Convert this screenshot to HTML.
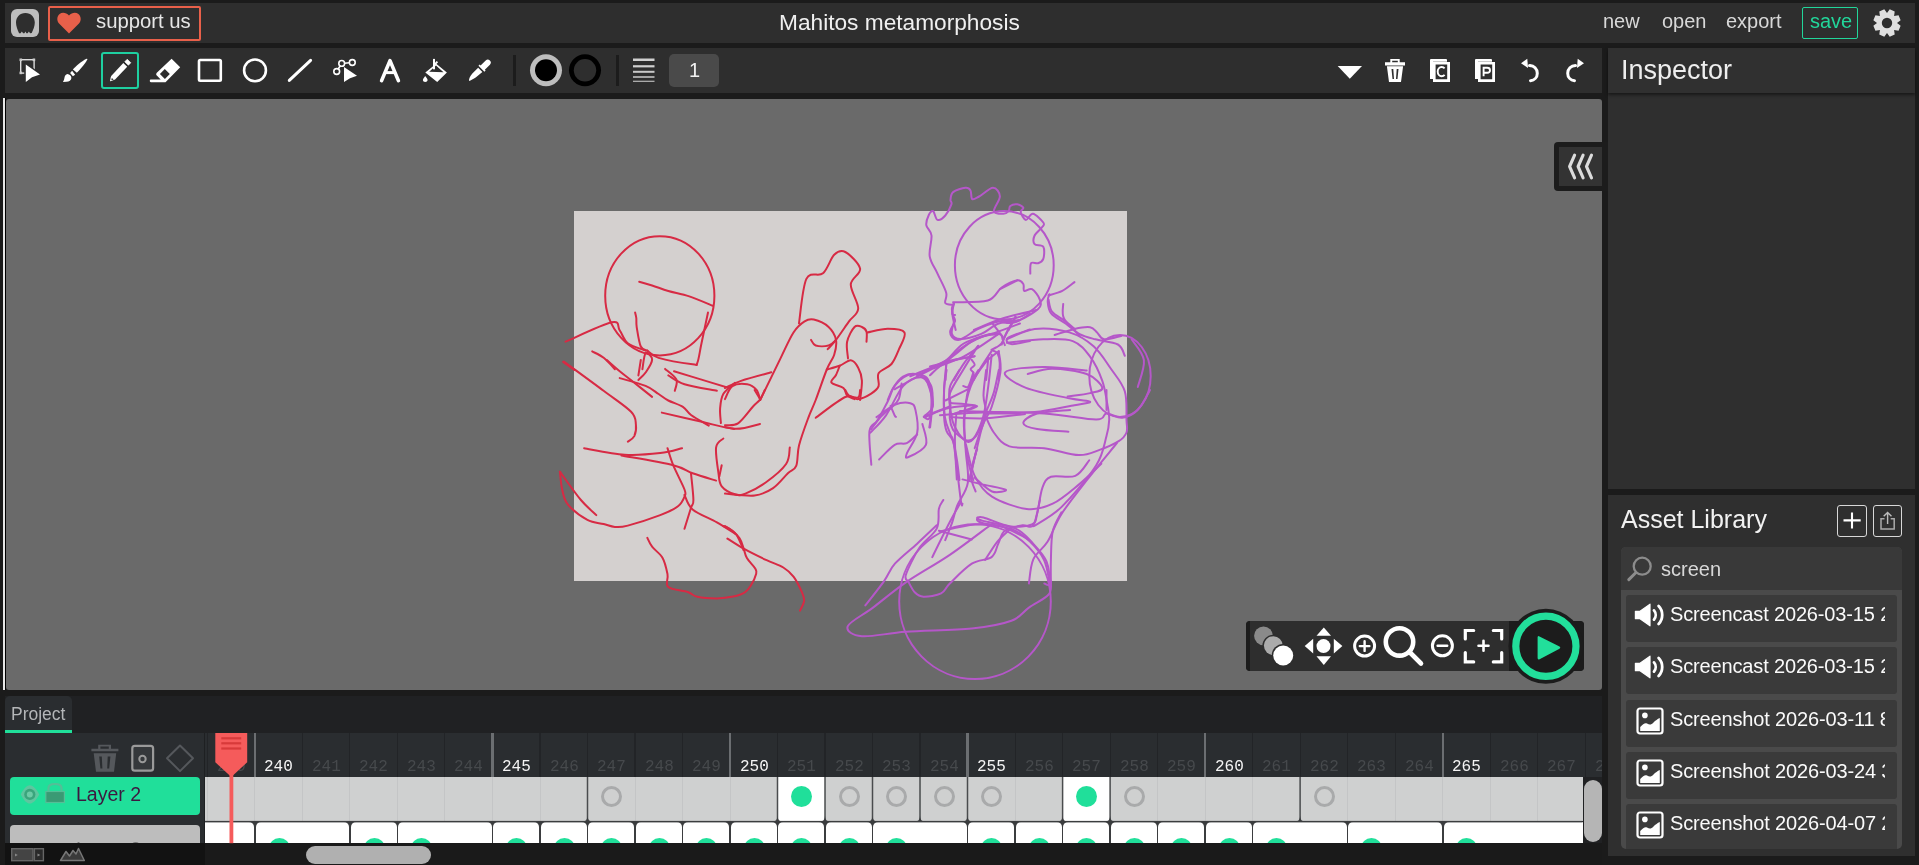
<!DOCTYPE html>
<html><head><meta charset="utf-8">
<style>
*{box-sizing:border-box;margin:0;padding:0}
html,body{width:1919px;height:865px;overflow:hidden;background:#1b1b1b;font-family:"Liberation Sans",sans-serif;position:relative}
.a{position:absolute}
.txt{white-space:nowrap;line-height:1;will-change:transform}
#topbar{left:5px;top:3px;width:1910px;height:40px;background:#2e2e2e}
#toolbar{left:5px;top:48px;width:1597px;height:45px;background:#2e2e2e}
#canvas{left:6px;top:99px;width:1596px;height:591px;background:#6a6a6a;border-radius:3px;overflow:hidden}
#insp-h{left:1608px;top:48px;width:307px;height:45px;background:#303030;box-shadow:0 2px 3px rgba(0,0,0,.5);z-index:2}
#insp-b{left:1608px;top:93px;width:307px;height:396px;background:#2f2f2f}
#asset{left:1608px;top:495px;width:307px;height:361px;background:#2f2f2f}
#timeline{left:5px;top:696px;width:1597px;height:169px;background:#202123}
</style></head><body>
<div id="topbar" class="a"></div>
<div id="toolbar" class="a"></div>
<div id="canvas" class="a"></div>
<div id="insp-h" class="a"></div>
<div id="insp-b" class="a"></div>
<div id="asset" class="a"></div>
<div id="timeline" class="a"></div>

<!-- TOPBAR CONTENT -->
<div class="a" style="left:11px;top:9px;width:28px;height:28px;border-radius:6px;background:#bdbdbd"></div>
<svg class="a" style="left:11px;top:9px" width="28" height="28" viewBox="0 0 28 28"><path d="M14.4 4 C8.8 4 5 8.2 5 13.6 C5 17.5 6.6 21 8.1 24.2 L9.6 24.2 L10.8 22.6 L12.2 24.2 L13.4 24.2 L14.4 22.6 L15.4 24.2 L16.6 24.2 L17.9 22.6 L19.1 24.2 L20.7 24 C22.2 20.8 23.8 17.5 23.8 13.6 C23.8 8.2 20 4 14.4 4Z" fill="#2e2e2e"/></svg>
<div class="a" style="left:48px;top:6px;width:153px;height:35px;border:2px solid #e8604a;border-radius:2px"></div>
<svg class="a" style="left:57px;top:12px" width="24" height="22" viewBox="0 0 24 22"><path d="M12 21.5 L2.3 11.8 C-0.5 9 -0.3 4.3 2.6 2 C5.2 0 9.3 0.5 12 3.6 C14.7 0.5 18.8 0 21.4 2 C24.3 4.3 24.5 9 21.7 11.8Z" fill="#e8604a"/></svg>
<div class="a txt" style="left:96px;top:11px;font-size:20.3px;color:#e6e6e6">support us</div>
<div class="a txt" id="title" style="left:779px;top:11px;font-size:22.7px;color:#f0f0f0">Mahitos metamorphosis</div>
<div class="a txt" style="left:1603px;top:11px;font-size:20px;color:#d8d8d8">new</div>
<div class="a txt" style="left:1662px;top:11px;font-size:20px;color:#d8d8d8">open</div>
<div class="a txt" style="left:1726px;top:11px;font-size:20px;color:#d8d8d8">export</div>
<div class="a" style="left:1802px;top:7px;width:56px;height:32px;border:1.5px solid #22d69a;border-radius:2px"></div>
<div class="a txt" style="left:1810px;top:11px;font-size:20px;color:#22d69a">save</div>
<svg class="a" style="left:1873px;top:9px" width="28" height="28" viewBox="0 0 28 28"><path fill-rule="evenodd" fill="#e0e0e0" d="M14.00,4.00 L16.71,0.37 L21.72,2.44 L21.07,6.93 L25.56,6.28 L27.63,11.29 L24.00,14.00 L27.63,16.71 L25.56,21.72 L21.07,21.07 L21.72,25.56 L16.71,27.63 L14.00,24.00 L11.29,27.63 L6.28,25.56 L6.93,21.07 L2.44,21.72 L0.37,16.71 L4.00,14.00 L0.37,11.29 L2.44,6.28 L6.93,6.93 L6.28,2.44 L11.29,0.37Z M14 8.8 A5.2 5.2 0 1 0 14 19.2 A5.2 5.2 0 1 0 14 8.8Z"/></svg>


<!-- CANVAS CONTENT -->
<div class="a" style="left:3px;top:98px;width:1.6px;height:592px;background:#e8e8e8"></div>
<div class="a" style="left:4.6px;top:98px;width:1.4px;height:592px;background:#000"></div>
<div class="a" style="left:573.5px;top:211.3px;width:553.5px;height:369.7px;background:#d4d0cf"></div>
<!-- DRAWING -->
<svg class="a" style="left:0;top:0" width="1602" height="690" viewBox="0 0 1602 690">
<g fill="none" stroke="#d72a44" stroke-width="2" stroke-linecap="round" stroke-linejoin="round">
<ellipse cx="659.8" cy="295.8" rx="54.6" ry="59.6"/>
<path d="M639.2 281.8C641.4 282.4 647.2 284.0 652.1 285.5C657.0 287.0 662.1 289.2 668.3 291.0C674.5 292.8 681.9 293.9 689.3 296.4C696.7 298.9 708.9 304.2 712.8 305.8"/>
<path d="M635.1 312.5C635.3 313.4 636.0 315.6 636.3 318.0C636.6 320.4 636.0 322.4 636.7 327.1C637.5 331.9 639.0 342.6 640.8 346.5C642.6 350.4 646.2 349.9 647.3 350.6"/>
<path d="M708.0 312.5C706.9 317.6 703.3 334.9 701.5 343.3C699.7 351.7 698.9 359.2 697.4 362.7C695.9 366.2 699.1 365.1 692.6 364.3C686.1 363.5 666.2 360.2 658.6 357.9C651.0 355.6 649.2 351.8 647.3 350.6"/>
<path d="M565.5 341.7C573.2 338.5 602.7 324.2 611.7 322.3C620.7 320.4 617.0 326.9 619.7 330.4C622.4 333.9 623.5 339.9 627.8 343.3C632.1 346.7 642.6 349.4 645.6 350.6"/>
<path d="M592.2 351.4C594.2 352.5 600.2 355.0 604.0 358.0C607.8 361.0 613.1 367.3 614.9 369.2"/>
<path d="M563.1 361.9L574.4 370.0"/>
<path d="M642.4 369.2C642.9 366.5 644.0 354.6 645.6 353.0C647.2 351.4 652.0 356.3 652.1 359.5C652.2 362.7 648.3 368.6 646.0 372.0C643.7 375.4 639.7 378.7 638.4 380.0"/>
<path d="M563.9 361.6C570.5 366.5 592.4 382.4 603.6 390.8C614.8 399.2 625.7 406.2 631.1 411.8C636.5 417.4 635.4 420.6 635.9 424.7C636.4 428.8 635.6 433.3 634.3 436.1C632.9 438.9 628.9 440.8 627.8 441.7"/>
<path d="M606.8 360.0C608.9 361.9 615.1 367.5 619.7 371.3C624.3 375.1 628.9 378.4 634.3 382.7C639.7 387.0 649.1 394.5 652.1 396.9"/>
<path d="M619.7 378.1C624.0 379.4 639.1 383.2 645.6 385.9C652.1 388.5 654.8 391.6 658.6 394.0C662.4 396.4 664.2 398.4 668.3 400.5C672.3 402.6 679.1 404.5 682.9 406.9C686.7 409.3 686.7 411.9 691.0 415.0C695.3 418.1 705.8 423.8 708.8 425.6"/>
<path d="M638.4 375.4L640.8 360.0"/>
<path d="M665.1 368.9C667.0 370.6 674.8 375.8 676.4 379.4C678.0 383.0 675.1 388.9 674.8 390.8"/>
<path d="M674.0 371.3C678.5 372.6 691.4 376.6 700.7 379.4C710.0 382.2 724.9 386.8 729.8 388.3"/>
<path d="M668.3 375.4C671.0 376.9 676.4 381.7 684.5 384.3C692.6 386.9 711.5 389.7 716.9 390.8"/>
<path d="M661.8 412.6C668.3 414.1 688.5 418.8 700.7 421.5C712.9 424.2 725.1 428.4 735.0 428.8C744.9 429.2 755.8 424.8 760.0 424.0"/>
<path d="M735.0 382.7C733.0 384.6 725.8 389.7 723.3 394.0C720.8 398.3 720.5 403.8 720.1 408.6C719.7 413.5 720.8 420.7 720.9 423.1"/>
<path d="M584.1 448.2C590.9 449.3 611.9 453.9 624.6 454.7C637.3 455.5 650.6 454.2 660.2 453.1C669.8 452.0 678.5 449.0 682.1 448.2"/>
<path d="M621.4 455.5C630.0 457.1 661.3 462.2 673.2 465.2C685.1 468.2 685.5 470.7 692.6 473.3C699.8 475.9 712.2 479.4 716.1 480.6"/>
<path d="M667.5 448.2C668.5 451.0 670.4 458.3 673.2 465.2C676.0 472.1 682.6 484.3 684.5 489.5C686.4 494.7 685.6 493.7 684.5 496.5C683.4 499.3 682.0 503.1 678.0 506.2C674.0 509.3 668.6 511.9 660.2 515.1C651.8 518.3 635.3 523.6 627.8 525.6C620.2 527.6 618.9 527.2 614.9 526.9C610.9 526.6 608.2 525.2 603.6 524.0C599.0 522.8 593.3 523.1 587.4 519.9C581.5 516.7 572.2 509.6 568.0 504.6C563.8 499.6 563.6 495.5 562.3 490.0C560.9 484.5 560.3 474.8 559.9 471.7"/>
<path d="M691.0 473.3C691.4 477.8 693.4 494.2 693.4 500.0C693.4 505.8 692.5 503.0 691.0 507.8C689.5 512.6 685.6 525.3 684.5 528.8"/>
<path d="M723.3 438.5C722.1 440.0 716.9 441.6 716.1 447.4C715.3 453.2 717.6 466.8 718.5 473.3C719.4 479.8 719.0 482.8 721.7 486.3C724.5 489.8 731.0 493.1 735.0 494.3C739.0 495.5 740.3 495.6 745.4 493.6C750.5 491.6 758.9 487.4 765.7 482.5C772.5 477.6 782.1 469.9 786.1 464.0C790.1 458.1 789.2 450.2 789.8 447.4"/>
<path d="M721.7 465.2L719.3 476.5"/>
<path d="M559.9 471.7C563.4 476.4 574.8 492.8 580.9 500.0C587.0 507.2 593.7 512.6 596.3 515.1"/>
<path d="M684.5 494.9C685.9 497.3 687.2 504.8 692.6 509.4C698.0 514.0 709.8 518.3 716.9 522.4C724.0 526.5 732.0 531.8 735.0 533.7"/>
<path d="M727.4 538.6C730.1 540.3 737.2 545.1 743.7 548.7C750.2 552.3 760.0 557.1 766.6 560.2C773.2 563.3 778.8 564.7 783.3 567.5C787.8 570.3 790.6 572.6 793.7 576.8C796.8 580.9 800.3 588.4 802.0 592.4C803.7 596.4 804.4 597.8 804.1 600.8C803.8 603.8 800.7 609.1 800.0 610.7"/>
<path d="M647.3 537.8C648.1 539.3 649.5 543.3 652.1 546.7C654.7 550.1 660.0 553.4 662.6 558.0C665.2 562.6 666.5 569.4 667.5 574.2C668.5 579.1 664.9 584.1 668.3 587.1C671.7 590.1 682.9 590.4 687.7 592.0C692.6 593.6 692.5 595.7 697.4 596.8C702.3 597.9 710.9 598.4 716.9 598.4C722.9 598.4 728.6 597.6 733.3 596.6C737.9 595.6 741.8 594.3 744.8 592.4C747.8 590.5 749.1 588.3 751.0 585.2C752.9 582.1 755.5 576.5 756.2 573.7C756.9 570.9 756.8 571.1 755.2 568.5C753.7 565.9 748.8 561.4 746.9 558.1C745.0 554.8 744.9 552.0 743.7 548.7C742.5 545.4 741.7 541.4 739.6 538.3C737.5 535.2 733.9 532.0 731.2 530.0C728.5 528.0 724.6 526.7 723.3 526.0"/>
<path d="M799.0 323.3C800.2 315.9 802.4 287.2 806.4 278.9C810.4 270.6 818.4 277.3 823.0 273.3C827.6 269.3 830.5 258.4 834.2 254.8C837.9 251.2 841.0 249.7 845.3 252.0C849.6 254.3 859.2 263.3 860.1 268.7C861.0 274.1 851.1 277.8 850.8 284.4C850.5 291.0 858.5 302.3 858.2 308.5C857.9 314.7 852.7 316.2 849.0 321.4C845.3 326.6 839.5 335.3 836.0 339.9C832.5 344.5 829.1 347.6 827.7 349.2"/>
<path d="M760.2 400.0C763.6 393.1 775.0 369.6 780.5 358.4C786.0 347.1 789.5 338.7 793.5 332.5C797.5 326.3 801.2 323.5 804.6 321.4C808.0 319.2 809.8 318.7 813.8 319.6C817.8 320.5 824.9 323.6 828.6 327.0C832.3 330.4 835.1 335.3 836.0 339.9C836.9 344.5 835.7 349.8 834.2 354.7C832.7 359.6 829.9 361.9 826.8 369.5C823.7 377.1 818.8 391.9 815.7 400.0C812.6 408.1 811.1 410.2 808.3 417.8C805.5 425.4 801.0 437.5 799.0 445.5C797.0 453.5 798.1 461.3 796.2 465.9C794.4 470.5 791.8 469.6 787.9 473.3C784.0 477.0 778.6 484.4 773.1 488.1C767.6 491.8 762.6 494.6 754.6 495.5C746.6 496.4 729.9 493.9 725.0 493.6"/>
<path d="M811.0 339.9C811.8 340.8 812.8 344.6 815.7 345.5C818.6 346.4 825.2 346.4 828.6 345.5C832.0 344.6 834.8 340.8 836.0 339.9"/>
<path d="M725.0 388.0C727.8 386.8 734.0 383.2 741.7 380.6C749.4 378.0 766.4 373.7 771.3 372.3"/>
<path d="M725.0 399.1C726.2 397.0 728.7 388.7 732.4 386.2C736.1 383.7 743.2 383.7 747.2 384.3C751.2 384.9 754.3 387.3 756.5 389.9C758.7 392.5 759.6 398.3 760.2 400.0"/>
<path d="M866.5 341.8C866.5 340.1 867.3 334.1 866.5 331.6C865.7 329.1 863.9 327.8 861.9 327.0C859.9 326.2 857.0 324.5 854.5 327.0C852.0 329.5 848.2 336.6 847.1 341.8C846.0 347.0 847.9 355.6 848.0 358.4"/>
<path d="M867.5 332.5C870.9 331.9 881.6 328.8 887.8 328.8C894.0 328.8 902.6 329.1 904.5 332.5C906.4 335.9 901.2 343.9 899.0 349.2C896.8 354.4 894.9 360.0 891.5 364.0C888.1 368.0 880.8 369.5 878.6 373.2C876.5 376.9 879.8 382.8 878.6 386.2C877.4 389.6 874.6 391.5 871.2 393.6C867.8 395.8 862.5 398.5 858.2 399.1C853.9 399.7 852.4 393.9 845.3 397.0C838.2 400.1 820.6 414.3 815.7 417.8"/>
<path d="M826.8 369.5C828.9 368.9 835.7 367.3 839.7 365.8C843.7 364.3 847.7 360.0 850.8 360.3C853.9 360.6 856.4 364.3 858.2 367.7C860.1 371.1 861.6 375.2 861.9 380.6C862.2 386.0 860.4 396.8 860.1 400.0"/>
<path d="M839.7 365.8C839.1 367.3 837.4 372.2 836.0 375.0C834.6 377.8 830.2 380.3 831.4 382.5C832.6 384.7 840.8 385.9 843.4 388.0C846.0 390.1 845.2 393.5 847.1 395.4C849.0 397.2 853.3 398.5 854.5 399.1"/>
<path d="M725.0 425.2C727.2 424.9 733.4 426.4 738.0 423.3C742.6 420.2 749.1 410.7 752.8 406.7C756.5 402.7 758.2 402.1 760.2 399.3C762.2 396.5 764.0 391.6 764.8 390.0"/>
<path d="M754.6 390.0L760.2 399.3"/>
<path d="M725.0 427.0L734.3 428.9"/>
<path d="M845.3 390.0C845.9 390.9 846.9 394.4 849.0 395.6C851.1 396.8 856.4 398.3 858.2 397.4C860.1 396.5 859.8 391.2 860.1 390.0"/>
<path d="M725.0 526.0C726.9 527.4 733.0 530.3 736.1 534.3C739.2 538.3 742.3 547.4 743.5 550.0"/>
</g>
<g fill="none" stroke="#b557c9" stroke-width="2" stroke-linecap="round" stroke-linejoin="round">
<ellipse cx="1004.3" cy="265.3" rx="49.4" ry="54.2"/>
<path d="M953.1 304.8C951.8 304.5 946.4 305.1 945.3 303.1C944.1 301.1 947.5 297.6 946.2 292.7C944.9 287.8 940.2 279.7 937.5 273.6C934.8 267.5 930.7 262.7 929.7 256.3C928.7 250.0 932.1 240.7 931.5 235.5C930.9 230.3 926.7 228.6 926.3 225.1C925.9 221.6 927.8 217.0 928.9 214.7C930.0 212.4 931.8 210.3 933.2 211.2C934.6 212.1 935.5 219.2 937.5 219.9C939.5 220.6 943.0 218.1 945.3 215.5C947.6 212.9 950.5 206.9 951.4 204.3C952.3 201.7 950.2 201.9 950.5 199.9C950.8 197.9 950.6 194.1 953.1 192.1C955.6 190.1 962.4 188.1 965.3 187.8C968.2 187.5 969.4 188.5 970.5 190.4C971.6 192.3 970.8 198.1 972.2 199.1C973.6 200.1 975.6 198.4 979.1 196.5C982.6 194.6 989.5 187.8 993.0 187.8C996.5 187.8 999.8 192.6 999.9 196.5C1000.0 200.4 993.3 208.3 993.9 211.2C994.5 214.1 1000.9 213.8 1003.4 213.8C1005.9 213.8 1007.5 212.5 1008.6 211.2C1009.8 209.9 1008.8 207.2 1010.3 206.0C1011.8 204.8 1015.1 204.0 1017.3 204.3C1019.5 204.6 1022.7 206.4 1023.3 207.7C1023.9 209.0 1020.3 210.1 1020.7 212.1C1021.1 214.1 1023.9 219.6 1025.9 219.9C1027.9 220.2 1030.0 213.4 1032.9 213.8C1035.8 214.2 1041.7 220.3 1043.3 222.5C1044.9 224.7 1043.9 224.6 1042.4 226.8C1041.0 229.0 1035.9 232.6 1034.6 235.5C1033.3 238.4 1033.1 242.2 1034.6 244.1C1036.0 246.0 1041.8 244.2 1043.3 246.7C1044.8 249.2 1044.2 256.1 1043.3 258.9C1042.4 261.6 1040.1 262.5 1038.1 263.2C1036.1 263.9 1032.4 261.5 1031.1 263.2C1029.8 264.9 1030.4 271.9 1030.3 273.6"/>
<path d="M953.1 302.2C958.9 301.9 979.7 302.9 987.8 300.5C995.9 298.1 996.8 290.9 1001.7 287.5C1006.6 284.1 1013.7 280.8 1017.3 280.2C1020.9 279.6 1022.1 282.2 1023.3 284.0C1024.5 285.8 1022.8 290.0 1024.2 290.9C1025.7 291.8 1029.4 287.8 1032.0 289.2C1034.6 290.6 1038.8 296.3 1039.8 299.6C1040.8 302.9 1042.1 305.4 1038.1 309.1C1034.0 312.9 1021.6 319.9 1015.5 322.1C1009.4 324.3 1004.0 322.1 1001.7 322.1"/>
<path d="M954.0 303.9C953.7 305.5 952.0 309.1 952.3 313.5C952.6 317.9 955.1 327.2 955.7 330.0"/>
<path d="M1048.5 295.3C1050.8 294.6 1058.0 293.1 1062.3 290.9C1066.6 288.7 1072.5 283.6 1074.5 282.1"/>
<path d="M1048.5 299.6C1049.1 301.6 1049.4 308.2 1052.0 311.7C1054.6 315.2 1060.3 317.5 1064.1 320.4C1067.9 323.3 1073.2 327.6 1075.0 329.0"/>
<path d="M1063.2 303.9C1063.3 306.4 1061.3 313.4 1064.1 318.7C1066.8 324.0 1077.1 333.0 1079.7 335.9"/>
<path d="M973.9 330.0C978.5 328.1 991.3 322.0 1001.7 318.7C1012.1 315.4 1030.5 311.4 1036.3 310.0"/>
<path d="M1015.5 316.9L1008.6 330.0"/>
<path d="M1049.4 294.3C1049.1 295.4 1047.4 298.0 1047.7 301.2C1048.0 304.4 1048.1 309.6 1051.1 313.3C1054.1 317.1 1061.1 320.2 1065.9 323.7C1070.7 327.2 1074.8 331.5 1079.7 334.1C1084.6 336.7 1088.9 337.6 1095.3 339.3C1101.7 341.0 1113.0 341.8 1117.9 344.5C1122.8 347.2 1123.7 353.9 1124.8 355.8"/>
<ellipse cx="1120" cy="376" rx="30.7" ry="41"/>
<path d="M1131.7 339.3C1133.7 342.8 1142.9 352.2 1143.9 360.1C1144.9 368.1 1138.8 382.5 1137.8 387.0"/>
<path d="M1006.9 339.3C1011.5 337.6 1024.3 330.0 1034.7 328.9C1045.1 327.8 1059.5 329.5 1069.3 332.4C1079.1 335.3 1086.7 340.2 1093.6 346.3C1100.5 352.4 1105.7 361.3 1110.9 368.8C1116.1 376.3 1122.2 382.8 1124.8 391.3C1127.4 399.8 1126.2 413.1 1126.5 420.0C1126.8 426.9 1127.8 429.0 1126.5 432.5C1125.2 436.0 1123.2 438.3 1118.7 441.2C1114.2 444.1 1106.2 447.6 1099.6 449.9C1092.9 452.2 1088.0 455.4 1078.8 455.1C1069.5 454.8 1055.7 449.6 1044.1 448.2C1032.5 446.8 1017.8 449.0 1009.4 446.4C1001.0 443.8 997.8 437.7 993.8 432.5C989.8 427.3 986.5 418.1 985.1 415.2"/>
<path d="M1006.9 342.8C1013.0 342.2 1032.3 339.6 1043.3 339.3C1054.3 339.0 1065.0 338.2 1072.8 341.1C1080.6 344.0 1085.2 350.1 1090.1 356.7C1095.0 363.3 1099.4 372.8 1102.3 380.9C1105.2 389.0 1106.3 398.7 1107.5 405.2C1108.7 411.7 1109.4 414.9 1109.2 420.0C1109.0 425.1 1108.7 428.4 1106.5 436.0C1104.3 443.6 1103.6 453.6 1096.1 465.5C1088.6 477.4 1071.8 497.0 1061.4 507.1C1051.0 517.2 1038.3 523.0 1033.7 526.2"/>
<path d="M1054.6 335.0C1057.9 334.0 1068.6 330.2 1074.5 328.9C1080.4 327.6 1086.3 326.6 1090.1 327.2C1093.9 327.8 1094.8 330.4 1097.1 332.4C1099.4 334.4 1100.0 338.7 1104.0 339.3C1108.0 339.9 1118.4 336.5 1121.3 335.9"/>
<path d="M1086.7 370.5C1079.5 369.9 1056.9 366.8 1043.3 367.1C1029.7 367.4 1008.1 368.8 1005.2 372.3C1002.3 375.8 1015.3 383.6 1026.0 387.9C1036.7 392.2 1058.6 396.0 1069.3 398.3C1080.0 400.6 1089.2 400.6 1090.1 401.7C1091.0 402.8 1083.7 403.5 1074.5 405.2C1065.3 406.9 1047.1 411.0 1034.7 412.1C1022.3 413.2 1012.5 412.3 1000.0 412.1C987.5 411.9 966.7 411.2 960.0 411.0"/>
<path d="M1027.7 374.0C1031.8 373.1 1042.2 368.8 1052.0 368.8C1061.8 368.8 1078.3 370.8 1086.7 374.0C1095.1 377.2 1101.7 384.7 1102.3 387.9C1102.9 391.1 1095.9 391.7 1090.1 393.1C1084.3 394.5 1071.3 395.9 1067.6 396.5"/>
<path d="M1000.0 289.1L1017.3 280.4"/>
<path d="M1015.6 316.8C1013.9 320.0 1007.5 331.3 1005.2 335.9C1002.9 340.5 1002.3 343.1 1001.7 344.5"/>
<path d="M871.3 464.7C871.0 459.1 868.5 438.3 869.5 430.9C870.5 423.5 874.3 425.4 877.3 420.5C880.3 415.6 884.8 407.3 887.7 401.5C890.6 395.7 891.5 390.2 894.7 385.9C897.9 381.6 902.8 377.4 906.8 375.5C910.8 373.6 915.4 374.0 918.9 374.6C922.4 375.2 925.6 375.9 927.6 378.9C929.6 381.9 930.5 387.0 931.1 392.8C931.7 398.6 931.4 407.8 931.1 413.6C930.8 419.4 929.6 425.2 929.3 427.5"/>
<path d="M876.5 417.1C879.5 415.1 889.1 407.2 894.7 404.9C900.3 402.6 906.8 402.3 910.3 403.2C913.8 404.1 914.4 405.2 915.5 410.1C916.6 415.0 918.7 425.5 917.2 432.7C915.8 439.9 908.2 449.4 906.8 453.5C905.3 457.6 905.3 458.4 908.5 457.0C911.7 455.6 923.6 450.3 925.9 444.8C928.2 439.3 923.0 427.5 922.4 424.0"/>
<path d="M879.1 459.5C881.7 457.1 890.1 447.5 894.7 444.8C899.3 442.1 903.0 444.8 906.8 443.1C910.5 441.4 915.5 435.8 917.2 434.4"/>
<path d="M870.4 432.7C873.0 429.8 880.5 423.1 886.0 415.3C891.5 407.5 897.5 392.2 903.3 385.9C909.1 379.5 916.4 377.2 920.7 377.2C925.0 377.2 927.3 381.0 929.3 385.9C931.3 390.8 933.7 401.5 932.8 406.7C931.9 411.9 921.8 416.8 924.1 417.1C926.4 417.4 938.0 410.3 946.7 408.4C955.4 406.5 975.2 404.8 976.1 405.8C977.0 406.8 955.9 413.1 951.9 414.5"/>
<path d="M894.7 389.3C900.5 386.1 917.8 375.8 929.3 370.3C940.8 364.8 952.4 362.5 964.0 356.4C975.6 350.3 992.9 337.6 998.7 333.9"/>
<path d="M910.3 376.3C916.4 373.9 936.0 364.9 946.7 361.6C957.4 358.3 969.8 357.3 974.4 356.4"/>
<path d="M917.2 375.5C922.7 372.6 940.9 363.9 950.1 358.1C959.4 352.3 964.9 345.1 972.7 340.8C980.5 336.5 989.0 335.0 996.9 332.1C1004.8 329.2 1016.1 324.9 1020.0 323.5"/>
<path d="M946.7 361.6C946.3 366.2 944.4 380.1 944.1 389.3C943.8 398.6 943.9 409.6 944.9 417.1C945.9 424.6 948.9 429.7 950.4 434.3C951.9 438.9 952.2 433.7 953.9 444.7C955.6 455.7 959.4 490.4 960.8 500.2C962.2 510.0 962.2 503.1 962.5 503.7"/>
<path d="M977.9 346.0C975.6 349.8 968.6 360.7 964.0 368.5C959.4 376.3 952.4 386.4 950.1 392.8C947.8 399.2 949.5 401.5 950.1 406.7C950.7 411.9 951.3 418.5 953.6 424.0C955.9 429.5 960.8 437.0 964.0 439.6C967.2 442.2 969.5 443.4 972.7 439.6C975.9 435.9 980.5 426.1 983.1 417.1C985.7 408.2 986.9 396.3 988.3 385.9C989.7 375.5 991.1 359.9 991.7 354.7"/>
<path d="M998.7 351.2C996.4 353.2 989.4 357.5 984.8 363.3C980.2 369.1 974.4 376.9 970.9 385.9C967.4 394.9 964.9 406.4 964.0 417.1C963.1 427.8 965.1 439.0 965.7 450.0C966.3 461.0 969.2 473.7 967.8 482.9C966.4 492.1 959.9 498.8 957.3 505.4C954.7 512.0 954.1 516.9 952.1 522.7C950.1 528.5 946.4 537.2 945.2 540.1"/>
<path d="M998.7 351.2C999.0 354.7 1001.6 362.8 1000.4 372.0C999.2 381.2 994.6 398.0 991.7 406.7C988.8 415.4 985.9 417.1 983.1 424.0C980.3 430.9 976.1 444.2 974.7 448.2"/>
<path d="M954.5 320.0C954.1 322.3 950.9 330.7 951.9 333.9C952.9 337.1 955.6 339.1 960.5 339.1C965.4 339.1 974.9 336.5 981.3 333.9C987.7 331.3 992.2 325.8 998.7 323.5C1005.2 321.2 1016.5 320.6 1020.0 320.0"/>
<path d="M984.8 413.6L1020.0 413.6"/>
<path d="M966.0 444.7C967.5 449.9 970.4 467.2 974.7 475.9C979.0 484.6 983.3 491.2 992.0 496.7C1000.7 502.2 1016.6 507.7 1026.7 508.9C1036.8 510.1 1044.0 507.8 1052.7 503.7C1061.4 499.6 1070.7 491.2 1078.8 484.6C1086.9 478.0 1097.5 467.3 1101.3 463.8"/>
<path d="M1089.2 460.3C1086.9 462.9 1081.7 473.1 1075.3 475.9C1068.9 478.6 1056.5 474.8 1051.0 476.8C1045.5 478.8 1044.6 481.9 1042.3 488.1C1040.0 494.3 1038.8 508.0 1037.1 514.1C1035.4 520.2 1036.5 522.5 1031.9 524.5C1027.3 526.5 1017.5 527.4 1009.4 526.2C1001.3 525.0 988.8 518.8 983.4 517.5C978.0 516.2 977.6 517.5 977.3 518.4C977.0 519.3 975.7 520.8 981.6 522.7C987.5 524.6 1004.8 526.5 1012.9 529.7C1021.0 532.9 1025.0 536.8 1030.2 541.8C1035.4 546.8 1040.8 553.0 1044.1 560.0C1047.4 567.0 1048.8 579.6 1049.8 583.5"/>
<path d="M1116.9 443.0C1112.0 449.1 1096.7 467.5 1087.4 479.4C1078.2 491.2 1068.1 503.7 1061.4 514.1C1054.8 524.5 1052.2 534.3 1047.5 541.8C1042.8 549.3 1036.4 552.3 1033.3 559.3C1030.2 566.2 1029.6 579.5 1028.9 583.5"/>
<path d="M1061.4 512.3C1060.0 515.5 1054.5 523.4 1052.7 531.4C1051.0 539.4 1051.2 551.3 1050.9 560.0C1050.6 568.7 1050.9 579.6 1050.9 583.5"/>
<path d="M940.0 415.2C947.2 414.8 966.0 412.9 983.4 412.6C1000.8 412.3 1025.3 412.4 1044.1 413.5C1062.9 414.6 1085.7 419.5 1096.1 419.5C1106.5 419.5 1102.2 413.8 1106.5 413.5C1110.8 413.2 1116.9 418.4 1122.1 417.8C1127.3 417.2 1133.0 414.6 1137.7 410.0C1142.4 405.4 1148.0 393.3 1150.0 390.0"/>
<path d="M1070.1 410.0C1064.6 410.6 1044.9 411.3 1037.1 413.5C1029.3 415.7 1023.3 420.4 1023.3 423.0C1023.3 425.6 1029.6 427.7 1037.1 429.1C1044.6 430.6 1063.2 431.3 1068.4 431.7"/>
<path d="M962.5 479.4C966.0 480.3 976.2 482.9 983.4 484.6C990.6 486.3 1004.5 488.7 1005.9 489.8C1007.3 490.9 997.2 493.5 992.0 491.5C986.8 489.5 977.6 480.0 974.7 477.7"/>
<path d="M976.4 449.9C975.5 454.2 971.3 469.0 971.2 475.9C971.1 482.8 974.9 488.9 975.6 491.5"/>
<path d="M1106.5 410.0L1106.5 390.0"/>
<ellipse cx="975" cy="601.6" rx="75.8" ry="77.4"/>
<path d="M991.6 524.2C984.6 529.3 964.1 545.2 949.8 554.9C935.5 564.6 918.7 573.6 905.9 582.4C893.1 591.2 882.7 600.3 873.0 607.6C863.3 614.9 849.5 621.5 847.7 626.3C845.9 631.1 852.3 635.3 862.0 636.2C871.7 637.1 887.6 633.1 905.9 631.8C924.2 630.5 954.2 630.3 971.8 628.5C989.4 626.7 1001.9 624.3 1011.4 620.8C1020.9 617.3 1022.7 612.0 1028.9 607.6C1035.1 603.2 1045.0 598.9 1048.7 594.5C1052.4 590.1 1050.5 583.5 1050.9 581.3"/>
<path d="M865.3 605.4C868.4 601.4 879.0 588.2 883.9 581.3C888.8 574.3 889.4 569.9 894.9 563.7C900.4 557.5 909.9 550.3 916.9 543.9C923.9 537.5 933.4 528.4 936.7 525.3"/>
<path d="M908.1 581.3C907.7 580.2 904.1 580.2 905.9 574.7C907.7 569.2 914.0 556.0 919.1 548.3C924.2 540.6 933.4 535.2 936.7 528.6C940.0 522.0 937.8 513.6 938.9 508.8C940.0 504.0 942.6 501.5 943.3 500.0"/>
<path d="M908.1 581.3C909.2 583.1 912.1 589.7 914.7 592.3C917.3 594.9 919.1 596.5 923.5 596.7C927.9 596.9 936.7 595.6 941.1 593.4C945.5 591.2 944.7 588.5 949.8 583.5C954.9 578.5 964.8 568.1 971.8 563.7C978.8 559.3 987.2 560.4 991.6 557.1C996.0 553.8 996.0 548.3 998.2 543.9C1000.4 539.5 1000.8 533.9 1004.8 530.8C1008.8 527.7 1017.5 526.2 1022.3 525.3C1027.0 524.4 1030.4 529.5 1033.3 525.3C1036.2 521.1 1038.8 504.2 1039.9 500.0"/>
<path d="M977.3 517.6C978.2 518.1 976.4 519.1 982.8 520.9C989.2 522.7 1007.3 524.8 1015.7 528.6C1024.1 532.4 1028.2 538.4 1033.3 543.9C1038.4 549.4 1043.8 554.9 1046.5 561.5C1049.2 568.1 1050.2 579.8 1049.8 583.5C1049.4 587.2 1045.2 583.5 1044.3 583.5"/>
<path d="M932.3 557.1C935.2 551.2 945.0 531.1 949.8 522.0C954.5 512.9 959.0 505.5 960.8 502.2"/>
<path d="M938.9 530.8L971.8 539.5"/>
<path d="M940.0 531.4C945.8 530.2 964.6 525.4 974.7 524.5C984.8 523.6 992.0 523.9 1000.7 526.2C1009.4 528.5 1022.4 536.4 1026.7 538.4"/>
<path d="M1009.4 529.7C1007.4 531.7 1001.2 536.8 997.2 541.8C993.2 546.8 987.1 557.0 985.1 560.0"/>
<path d="M953.9 303.5C953.6 304.4 952.1 306.8 951.9 308.7C951.7 310.6 952.4 312.9 952.9 315.0C953.4 317.1 955.4 318.6 955.0 321.2C954.6 323.8 950.8 328.0 950.3 330.6C949.8 333.2 950.6 335.2 951.9 336.8C953.2 338.4 955.9 340.0 958.1 340.0C960.4 340.0 962.3 338.6 965.4 336.8C968.5 335.1 972.3 331.8 976.8 329.5C981.3 327.2 988.1 324.8 992.4 323.3C996.7 321.8 998.6 321.1 1002.8 320.7C1007.0 320.3 1012.9 321.8 1017.4 320.7C1021.9 319.6 1027.9 315.0 1030.0 313.9"/>
<path d="M952.9 304.6C952.8 306.2 952.0 312.2 952.4 313.9C952.8 315.6 954.6 314.8 955.0 315.0"/>
<path d="M930.0 366.5C932.6 365.6 940.4 364.4 945.6 360.8C950.8 357.2 956.0 349.0 961.2 345.2C966.4 341.4 971.6 339.8 976.8 337.9C982.0 336.0 988.4 334.2 992.4 333.7C996.4 333.2 999.1 333.6 1000.8 334.7C1002.5 335.8 1002.1 338.2 1002.8 340.0C1003.5 341.8 1004.5 344.3 1004.9 345.2"/>
<path d="M947.7 360.8C950.0 358.7 955.5 352.3 961.2 348.3C966.9 344.3 975.9 339.2 982.0 336.8C988.1 334.4 995.0 334.6 997.6 334.2"/>
<path d="M930.0 375.3C932.6 373.2 938.1 366.0 945.6 362.8C953.1 359.6 969.9 357.2 974.7 356.1"/>
<path d="M992.4 323.3L1002.8 336.8"/>
<path d="M1015.3 317.0C1013.8 319.8 1008.2 329.3 1006.0 333.7C1003.8 338.1 1003.4 340.9 1001.8 343.1C1000.2 345.4 998.3 346.1 996.6 347.2C994.9 348.3 992.3 349.4 991.4 349.8"/>
<path d="M978.4 345.7C976.0 348.6 968.4 357.1 964.3 362.8C960.2 368.5 955.6 377.1 953.9 380.0"/>
<path d="M946.1 362.8L945.6 380.0"/>
<path d="M971.6 359.7C972.1 360.6 974.9 363.3 974.7 364.9C974.5 366.5 970.8 367.7 970.6 369.1C970.4 370.5 973.4 371.4 973.7 373.2C974.1 375.0 972.9 378.9 972.7 380.0"/>
<path d="M992.4 350.4C993.3 350.9 996.4 351.4 997.6 353.5C998.8 355.6 999.5 358.4 999.7 362.8C999.9 367.2 998.9 377.1 998.7 380.0"/>
<path d="M991.4 351.4C989.5 354.3 982.8 364.3 979.9 369.1C977.0 373.9 974.7 378.2 973.7 380.0"/>
<path d="M988.3 357.6L986.2 380.0"/>
<path d="M1030.0 329.5C1026.3 330.9 1011.1 335.5 1008.0 337.9C1004.9 340.3 1007.5 343.6 1011.2 344.1C1014.9 344.6 1026.9 341.5 1030.0 341.0"/>
<path d="M946.6 370.0C946.2 373.2 944.5 381.2 944.1 389.1C943.7 397.0 943.7 410.1 944.1 417.1C944.5 424.1 945.1 427.1 946.6 431.1C948.1 435.1 951.3 436.5 953.0 441.2C954.7 445.9 955.7 452.6 956.8 459.1C957.9 465.6 959.0 476.5 959.4 480.0"/>
<path d="M959.4 370.0C957.9 372.6 952.1 381.1 950.4 385.3C948.7 389.5 949.2 392.4 949.2 395.4C949.2 398.4 950.3 399.3 950.4 403.1C950.5 406.9 949.4 413.9 949.8 418.3C950.2 422.8 951.4 426.8 953.0 429.8C954.6 432.8 956.9 434.4 959.4 436.2C961.9 438.0 965.5 440.6 968.3 440.6C971.0 440.6 973.6 439.1 975.9 436.2C978.2 433.3 980.6 427.4 982.3 423.4C984.0 419.4 984.2 417.1 986.1 412.0C988.0 406.9 991.6 399.9 993.7 392.9C995.8 385.9 997.9 373.8 998.8 370.0"/>
<path d="M986.1 370.0C985.7 374.2 983.5 388.2 983.5 395.4C983.5 402.6 986.5 407.4 986.1 413.3C985.7 419.2 982.7 424.5 981.0 431.1C979.3 437.7 977.8 444.6 975.9 452.7C974.0 460.8 970.6 475.4 969.5 480.0"/>
<path d="M978.4 370.0C977.1 372.1 972.7 378.5 970.8 382.7C968.9 386.9 968.1 389.0 967.0 395.4C965.9 401.8 964.6 412.4 964.4 420.9C964.2 429.4 964.9 438.7 965.7 446.3C966.6 453.9 968.2 461.1 969.5 466.7C970.8 472.3 972.7 477.8 973.3 480.0"/>
<path d="M950.4 417.1C956.1 417.3 972.4 418.8 984.8 418.3C997.2 417.8 1018.3 414.6 1025.0 413.9"/>
<path d="M945.4 400.5L968.3 389.1"/>
<path d="M950.4 403.1C954.9 403.6 977.0 404.4 977.2 406.3C977.4 408.2 956.0 413.1 951.7 414.5"/>
<path d="M925.0 415.8C928.4 414.5 941.2 409.9 945.4 408.2C949.6 406.5 949.6 406.0 950.4 405.6"/>
<path d="M925.0 377.6C926.1 379.1 930.1 382.5 931.4 386.5C932.7 390.5 932.8 395.0 932.6 401.8C932.4 408.6 930.5 423.1 930.1 427.3"/>
<path d="M963.2 385.9C964.1 386.0 966.6 388.7 968.3 386.5C970.0 384.3 972.5 374.8 973.3 372.5"/>
<path d="M956.2 415.8C956.0 420.0 954.8 430.6 954.9 441.2C955.0 451.8 956.5 473.0 956.8 479.4"/>
<path d="M977.2 448.9C976.6 451.0 974.6 456.4 973.3 461.6C972.0 466.8 970.1 476.9 969.5 480.0"/>
<path d="M890.5 405.8C891.2 407.4 893.8 413.6 894.7 415.5C895.6 417.4 895.8 416.7 896.0 416.9"/>
<path d="M887.7 400.2C888.6 398.1 890.8 391.6 893.3 387.7C895.8 383.8 899.3 378.9 903.0 376.6C906.7 374.3 911.8 373.4 915.5 373.9C919.2 374.4 922.9 377.1 925.2 379.4C927.5 381.7 928.1 384.0 929.3 387.7C930.4 391.4 932.1 396.5 932.1 401.6C932.1 406.7 930.7 415.8 929.3 418.3C927.9 420.9 924.7 417.1 923.8 416.9"/>
<path d="M901.6 383.6C901.1 386.1 900.4 394.9 898.8 398.8C897.2 402.7 894.2 404.9 891.9 407.2C889.6 409.5 887.1 410.8 885.0 412.7C882.9 414.6 881.7 415.5 879.4 418.3C877.1 421.1 872.5 427.5 871.1 429.3"/>
</g>
</svg>
<!-- /DRAWING -->
<div class="a" style="left:1554px;top:142px;width:54px;height:49px;background:#1c1c1c;border-radius:4px 0 0 4px"></div>
<div class="a" style="left:1559px;top:147px;width:43px;height:39px;background:#333333"></div>
<svg class="a" style="left:1560px;top:145px" width="42" height="44" viewBox="0 0 42 44"><g fill="none" stroke="#dcdcdc" stroke-width="3.1" stroke-linecap="round" stroke-linejoin="round"><path d="M14.6 10.2 L9.6 21.5 L14.6 32.8"/><path d="M23.1 10.2 L18.1 21.5 L23.1 32.8"/><path d="M31.5 10.2 L26.5 21.5 L31.5 32.8"/></g></svg>
<div class="a" style="left:1246px;top:621.3px;width:338px;height:49.4px;background:#2e2e2e;border-radius:4px"></div>
<div class="a" style="left:1246px;top:621.3px;width:4px;height:49.4px;background:#1c1c1c;border-radius:4px 0 0 4px"></div>
<div class="a" style="left:1509px;top:621.3px;width:75px;height:49.4px;background:#1c1c1c;border-radius:0 4px 4px 0"></div>
<svg class="a" style="left:1240px;top:600px" width="360" height="90" viewBox="1240 600 360 90">
 <circle cx="1263.5" cy="635.8" r="9.4" fill="#8a8a8a"/>
 <circle cx="1273.3" cy="645.6" r="10.9" fill="#2e2e2e"/><circle cx="1273.3" cy="645.6" r="9.4" fill="#ababab"/>
 <circle cx="1283.2" cy="655.5" r="11.5" fill="#2e2e2e"/><circle cx="1283.2" cy="655.5" r="10" fill="#fff"/>
 <g fill="#fff">
  <circle cx="1323.5" cy="646.1" r="7"/>
  <path d="M1323.8 627.4 L1331 635.8 L1316.5 635.8Z"/>
  <path d="M1323.8 665 L1331 656.2 L1316.5 656.2Z"/>
  <path d="M1304.7 646.1 L1313.2 638.8 L1313.2 653.4Z"/>
  <path d="M1342.4 646.1 L1333.8 638.8 L1333.8 653.4Z"/>
 </g>
 <g fill="none" stroke="#fff" stroke-linecap="round">
  <circle cx="1364.6" cy="646.1" r="10" stroke-width="3"/>
  <path d="M1364.6 641.3 L1364.6 650.9 M1359.8 646.1 L1369.4 646.1" stroke-width="2.4"/>
  <circle cx="1399.5" cy="641.9" r="13.7" stroke-width="4.6"/>
  <path d="M1409.5 652 L1421 663.5" stroke-width="4.6"/>
  <circle cx="1442.4" cy="645.8" r="10" stroke-width="3"/>
  <path d="M1437.6 645.8 L1447.2 645.8" stroke-width="2.4"/>
  <path d="M1465.3 639 L1465.3 630.5 L1473.7 630.5 M1493.3 630.5 L1501.7 630.5 L1501.7 639 M1465.3 652.5 L1465.3 661.9 L1473.7 661.9 M1493.3 661.9 L1501.7 661.9 L1501.7 652.5" stroke-width="3.2"/>
  <path d="M1483.5 640.8 L1483.5 650.8 M1478.5 645.8 L1488.5 645.8" stroke-width="2.6"/>
 </g>
 <circle cx="1545.9" cy="646.3" r="37.5" fill="#1c1c1c"/>
 <circle cx="1545.9" cy="646.3" r="30.1" fill="none" stroke="#22df9b" stroke-width="7.2"/>
 <path d="M1539.5 636.5 Q1537.6 635 1537.6 637.5 L1537.6 657.8 Q1537.6 660.4 1539.6 659.2 L1559.5 648.8 Q1561.2 647.6 1559.5 646.5Z" fill="#22df9b"/>
</svg>


<!-- ASSET CONTENT -->
<div class="a txt" style="left:1621px;top:507px;font-size:25px;color:#f2f2f2">Asset Library</div>
<div class="a" style="left:1837px;top:505px;width:30px;height:32px;border:1.3px solid #d8d8d8;border-radius:3px"></div>
<div class="a" style="left:1873px;top:505px;width:29px;height:32px;border:1.3px solid #d8d8d8;border-radius:3px"></div>
<svg class="a" style="left:1837px;top:505px" width="66" height="32" viewBox="1837 505 66 32"><path d="M1852 512.5 L1852 528.4 M1843.5 520.4 L1860.7 520.4" stroke="#fff" stroke-width="2.1"/><path d="M1884.5 518.8 L1881 518.8 L1881 529 L1894.2 529 L1894.2 518.8 L1890.7 518.8" fill="none" stroke="#aaa" stroke-width="1.5"/><path d="M1887.6 524 L1887.6 512.5 M1883.7 516.3 L1887.6 512.4 L1891.5 516.3" fill="none" stroke="#bbb" stroke-width="1.4"/></svg>
<div class="a" style="left:1621px;top:547px;width:281px;height:302px;background:#4a4a4a;border-radius:5px;overflow:hidden">
  <div class="a" style="left:0;top:0;width:281px;height:43px;background:#393939"></div>
  <div class="a" style="left:5px;top:48.0px;width:271px;height:47px;background:#3a3a3a;border-radius:3px"></div>
  <div class="a" style="left:5px;top:100.0px;width:271px;height:47px;background:#3a3a3a;border-radius:3px"></div>
  <div class="a" style="left:5px;top:152.5px;width:271px;height:47px;background:#3a3a3a;border-radius:3px"></div>
  <div class="a" style="left:5px;top:205.0px;width:271px;height:47px;background:#3a3a3a;border-radius:3px"></div>
  <div class="a" style="left:5px;top:257.0px;width:271px;height:47px;background:#3a3a3a;border-radius:3px"></div>
</div>
<svg class="a" style="left:1622px;top:550px" width="40" height="36" viewBox="1622 550 40 36"><circle cx="1642.2" cy="566.2" r="8.5" fill="none" stroke="#8c8c8c" stroke-width="2.3"/><path d="M1636 572.5 L1628.8 579.6" stroke="#8c8c8c" stroke-width="3" stroke-linecap="round"/></svg>
<div class="a txt" style="left:1661px;top:559px;font-size:20px;color:#d8d8d8">screen</div>
<div class="a txt" style="left:1670px;top:604.0px;width:215px;overflow:hidden;font-size:20px;letter-spacing:-0.15px;color:#fafafa">Screencast 2026-03-15 2</div>
<svg class="a" style="left:1634px;top:603.0px" width="32" height="24" viewBox="0 0 32 24"><path d="M1.4 8.3 L6 8.3 L16 1.2 L16 22.8 L6 15.7 L1.4 15.7Z" fill="#fff" stroke="#fff" stroke-width="1.2" stroke-linejoin="round"/><path d="M20 7.4 C22.2 10 22.2 14 20 16.6" fill="none" stroke="#fff" stroke-width="2.8" stroke-linecap="round"/><path d="M24.6 3 C29.4 7.8 29.4 16.2 24.6 21" fill="none" stroke="#fff" stroke-width="2.8" stroke-linecap="round"/></svg>
<div class="a txt" style="left:1670px;top:656.0px;width:215px;overflow:hidden;font-size:20px;letter-spacing:-0.15px;color:#fafafa">Screencast 2026-03-15 2</div>
<svg class="a" style="left:1634px;top:655.0px" width="32" height="24" viewBox="0 0 32 24"><path d="M1.4 8.3 L6 8.3 L16 1.2 L16 22.8 L6 15.7 L1.4 15.7Z" fill="#fff" stroke="#fff" stroke-width="1.2" stroke-linejoin="round"/><path d="M20 7.4 C22.2 10 22.2 14 20 16.6" fill="none" stroke="#fff" stroke-width="2.8" stroke-linecap="round"/><path d="M24.6 3 C29.4 7.8 29.4 16.2 24.6 21" fill="none" stroke="#fff" stroke-width="2.8" stroke-linecap="round"/></svg>
<div class="a txt" style="left:1670px;top:708.5px;width:215px;overflow:hidden;font-size:20px;letter-spacing:-0.15px;color:#fafafa">Screenshot 2026-03-11 8</div>
<svg class="a" style="left:1636px;top:706.5px" width="28" height="28" viewBox="0 0 28 28"><rect x="1.5" y="1.5" width="25" height="25" rx="2.5" fill="none" stroke="#fff" stroke-width="2.2"/><circle cx="8.9" cy="8.4" r="2.8" fill="#fff"/><path d="M4.2 24 L4.2 20 C7 17 9 15.5 11 16.5 C13.5 18 15 18.2 17.5 15.5 C19.5 13.5 21.5 12 23.8 11 L23.8 24Z" fill="#fff"/></svg>
<div class="a txt" style="left:1670px;top:761.0px;width:215px;overflow:hidden;font-size:20px;letter-spacing:-0.15px;color:#fafafa">Screenshot 2026-03-24 3</div>
<svg class="a" style="left:1636px;top:759.0px" width="28" height="28" viewBox="0 0 28 28"><rect x="1.5" y="1.5" width="25" height="25" rx="2.5" fill="none" stroke="#fff" stroke-width="2.2"/><circle cx="8.9" cy="8.4" r="2.8" fill="#fff"/><path d="M4.2 24 L4.2 20 C7 17 9 15.5 11 16.5 C13.5 18 15 18.2 17.5 15.5 C19.5 13.5 21.5 12 23.8 11 L23.8 24Z" fill="#fff"/></svg>
<div class="a txt" style="left:1670px;top:813.0px;width:215px;overflow:hidden;font-size:20px;letter-spacing:-0.15px;color:#fafafa">Screenshot 2026-04-07 2</div>
<svg class="a" style="left:1636px;top:811.0px" width="28" height="28" viewBox="0 0 28 28"><rect x="1.5" y="1.5" width="25" height="25" rx="2.5" fill="none" stroke="#fff" stroke-width="2.2"/><circle cx="8.9" cy="8.4" r="2.8" fill="#fff"/><path d="M4.2 24 L4.2 20 C7 17 9 15.5 11 16.5 C13.5 18 15 18.2 17.5 15.5 C19.5 13.5 21.5 12 23.8 11 L23.8 24Z" fill="#fff"/></svg>


<!-- TIMELINE CONTENT -->
<div class="a" style="left:5px;top:696px;width:67px;height:38px;background:#2a2d30;border-radius:5px 5px 0 0"></div>
<div class="a" style="left:5px;top:730px;width:67px;height:4px;background:#20df9a"></div>
<div class="a txt" style="left:11px;top:706px;font-size:17.5px;color:#b4b6b8">Project</div>
<div class="a" style="left:5px;top:733px;width:199.5px;height:111px;background:#2a2d30"></div>
<div class="a" style="left:204.3px;top:733px;width:2px;height:111px;background:#1e2022"></div>
<div class="a" style="left:10px;top:777px;width:190px;height:38.4px;background:#20df9a;border-radius:4px"></div>
<div class="a" style="left:10px;top:825.2px;width:190px;height:18px;background:#bdbdbd;border-radius:4px 4px 0 0;overflow:hidden">
  <div class="a txt" style="left:66px;top:15px;font-size:19.5px;color:#777">Layer 3</div>
</div>
<div class="a txt" style="left:76px;top:785px;font-size:19.5px;color:#3d1840">Layer 2</div>
<div class="a" style="left:5px;top:843.2px;width:200px;height:22px;background:#121212"></div>
<div class="a" style="left:205px;top:843.2px;width:1397px;height:22px;background:#1a1a1a"></div>
<svg class="a" style="left:5px;top:735px" width="200" height="130" viewBox="5 735 200 130">
 <g fill="#55585c">
  <path d="M98.2 744.8 L111 744.8 L111 748.8 L118.4 748.8 L118.4 751.3 L91.4 751.3 L91.4 748.8 L98.2 748.8Z M100.4 746.6 L100.4 748.8 L108.8 748.8 L108.8 746.6Z" fill-rule="evenodd"/>
  <path d="M93.7 753.3 L116.2 753.3 L114 771.8 L96 771.8Z M99.2 756.5 L100.4 768.5 L102.4 768.5 L101.8 756.5Z M107.7 756.5 L107.2 768.5 L109.2 768.5 L110.4 756.5Z" fill-rule="evenodd"/>
 </g>
 <rect x="132.3" y="745.9" width="20.8" height="24.8" rx="2.5" fill="#35383b" stroke="#9a9a9a" stroke-width="2.2"/>
 <circle cx="142.5" cy="759" r="3.2" fill="none" stroke="#9a9a9a" stroke-width="2"/>
 <path d="M180 745.5 L193 758.3 L180 771.1 L167 758.3Z" fill="none" stroke="#55585c" stroke-width="2" stroke-linejoin="round"/>
 <path d="M20.8 794.4 C24 788 27 785.3 29.8 785.3 C32.6 785.3 35.8 788 39.2 794.4 C35.8 800.8 32.6 803.4 29.8 803.4 C27 803.4 24 800.8 20.8 794.4Z" fill="#5ec69f"/>
 <circle cx="29.8" cy="794.4" r="5.6" fill="#3aa57c"/>
 <circle cx="29.8" cy="794.4" r="3" fill="#6ccba6"/>
 <path d="M48.5 791.5 L48.5 788 C48.5 785.3 50.5 784 55 784 C59.5 784 61.5 785.3 61.5 788 L61.5 791.5" fill="none" stroke="#55be97" stroke-width="2.2"/>
 <rect x="45.8" y="791.5" width="18.6" height="11" fill="#3a9a74" stroke="#55be97" stroke-width="1.2"/>
 <rect x="11.7" y="848.7" width="21.3" height="12" fill="#444" stroke="#666" stroke-width="1.4"/>
 <rect x="34.4" y="848.7" width="9" height="12" fill="#2a2a2a" stroke="#666" stroke-width="1.4"/>
 <path d="M15 853.5 L17.8 855 L15 856.5Z M37.5 853.5 L40.3 855 L37.5 856.5Z" fill="#888"/>
 <path d="M60.5 860.5 L66 851.5 L69.5 856 L73 850.5 L76 854 L78.5 848.5 L84.3 860.5Z" fill="#3a3a3a" stroke="#777" stroke-width="1.5" stroke-linejoin="round"/>
</svg>
<div class="a" style="left:205px;top:733px;width:1397px;height:44px;background:#2a2d30;overflow:hidden">
 <div class="a" style="left:1.8px;top:0;width:1.2px;height:44px;background:#222427"></div>
 <div class="a txt" style="left:11.9px;top:25.5px;font-family:'Liberation Mono',monospace;font-size:16px;color:#46494c">239</div>
 <div class="a" style="left:48.7px;top:0;width:2.4px;height:44px;background:#6b6e71"></div>
 <div class="a txt" style="left:59.4px;top:25.5px;font-family:'Liberation Mono',monospace;font-size:16px;color:#f4f4f4">240</div>
 <div class="a" style="left:96.8px;top:0;width:1.2px;height:44px;background:#222427"></div>
 <div class="a txt" style="left:106.9px;top:25.5px;font-family:'Liberation Mono',monospace;font-size:16px;color:#46494c">241</div>
 <div class="a" style="left:144.3px;top:0;width:1.2px;height:44px;background:#222427"></div>
 <div class="a txt" style="left:154.4px;top:25.5px;font-family:'Liberation Mono',monospace;font-size:16px;color:#46494c">242</div>
 <div class="a" style="left:191.8px;top:0;width:1.2px;height:44px;background:#222427"></div>
 <div class="a txt" style="left:201.9px;top:25.5px;font-family:'Liberation Mono',monospace;font-size:16px;color:#46494c">243</div>
 <div class="a" style="left:239.3px;top:0;width:1.2px;height:44px;background:#222427"></div>
 <div class="a txt" style="left:249.4px;top:25.5px;font-family:'Liberation Mono',monospace;font-size:16px;color:#46494c">244</div>
 <div class="a" style="left:286.2px;top:0;width:2.4px;height:44px;background:#6b6e71"></div>
 <div class="a txt" style="left:296.9px;top:25.5px;font-family:'Liberation Mono',monospace;font-size:16px;color:#f4f4f4">245</div>
 <div class="a" style="left:334.4px;top:0;width:1.2px;height:44px;background:#222427"></div>
 <div class="a txt" style="left:344.5px;top:25.5px;font-family:'Liberation Mono',monospace;font-size:16px;color:#46494c">246</div>
 <div class="a" style="left:381.9px;top:0;width:1.2px;height:44px;background:#222427"></div>
 <div class="a txt" style="left:392.0px;top:25.5px;font-family:'Liberation Mono',monospace;font-size:16px;color:#46494c">247</div>
 <div class="a" style="left:429.4px;top:0;width:1.2px;height:44px;background:#222427"></div>
 <div class="a txt" style="left:439.5px;top:25.5px;font-family:'Liberation Mono',monospace;font-size:16px;color:#46494c">248</div>
 <div class="a" style="left:476.9px;top:0;width:1.2px;height:44px;background:#222427"></div>
 <div class="a txt" style="left:487.0px;top:25.5px;font-family:'Liberation Mono',monospace;font-size:16px;color:#46494c">249</div>
 <div class="a" style="left:523.8px;top:0;width:2.4px;height:44px;background:#6b6e71"></div>
 <div class="a txt" style="left:534.5px;top:25.5px;font-family:'Liberation Mono',monospace;font-size:16px;color:#f4f4f4">250</div>
 <div class="a" style="left:571.9px;top:0;width:1.2px;height:44px;background:#222427"></div>
 <div class="a txt" style="left:582.0px;top:25.5px;font-family:'Liberation Mono',monospace;font-size:16px;color:#46494c">251</div>
 <div class="a" style="left:619.4px;top:0;width:1.2px;height:44px;background:#222427"></div>
 <div class="a txt" style="left:629.5px;top:25.5px;font-family:'Liberation Mono',monospace;font-size:16px;color:#46494c">252</div>
 <div class="a" style="left:666.9px;top:0;width:1.2px;height:44px;background:#222427"></div>
 <div class="a txt" style="left:677.0px;top:25.5px;font-family:'Liberation Mono',monospace;font-size:16px;color:#46494c">253</div>
 <div class="a" style="left:714.4px;top:0;width:1.2px;height:44px;background:#222427"></div>
 <div class="a txt" style="left:724.5px;top:25.5px;font-family:'Liberation Mono',monospace;font-size:16px;color:#46494c">254</div>
 <div class="a" style="left:761.3px;top:0;width:2.4px;height:44px;background:#6b6e71"></div>
 <div class="a txt" style="left:772.0px;top:25.5px;font-family:'Liberation Mono',monospace;font-size:16px;color:#f4f4f4">255</div>
 <div class="a" style="left:809.5px;top:0;width:1.2px;height:44px;background:#222427"></div>
 <div class="a txt" style="left:819.6px;top:25.5px;font-family:'Liberation Mono',monospace;font-size:16px;color:#46494c">256</div>
 <div class="a" style="left:857.0px;top:0;width:1.2px;height:44px;background:#222427"></div>
 <div class="a txt" style="left:867.1px;top:25.5px;font-family:'Liberation Mono',monospace;font-size:16px;color:#46494c">257</div>
 <div class="a" style="left:904.5px;top:0;width:1.2px;height:44px;background:#222427"></div>
 <div class="a txt" style="left:914.6px;top:25.5px;font-family:'Liberation Mono',monospace;font-size:16px;color:#46494c">258</div>
 <div class="a" style="left:952.0px;top:0;width:1.2px;height:44px;background:#222427"></div>
 <div class="a txt" style="left:962.1px;top:25.5px;font-family:'Liberation Mono',monospace;font-size:16px;color:#46494c">259</div>
 <div class="a" style="left:998.9px;top:0;width:2.4px;height:44px;background:#6b6e71"></div>
 <div class="a txt" style="left:1009.6px;top:25.5px;font-family:'Liberation Mono',monospace;font-size:16px;color:#f4f4f4">260</div>
 <div class="a" style="left:1047.0px;top:0;width:1.2px;height:44px;background:#222427"></div>
 <div class="a txt" style="left:1057.1px;top:25.5px;font-family:'Liberation Mono',monospace;font-size:16px;color:#46494c">261</div>
 <div class="a" style="left:1094.5px;top:0;width:1.2px;height:44px;background:#222427"></div>
 <div class="a txt" style="left:1104.6px;top:25.5px;font-family:'Liberation Mono',monospace;font-size:16px;color:#46494c">262</div>
 <div class="a" style="left:1142.0px;top:0;width:1.2px;height:44px;background:#222427"></div>
 <div class="a txt" style="left:1152.1px;top:25.5px;font-family:'Liberation Mono',monospace;font-size:16px;color:#46494c">263</div>
 <div class="a" style="left:1189.5px;top:0;width:1.2px;height:44px;background:#222427"></div>
 <div class="a txt" style="left:1199.6px;top:25.5px;font-family:'Liberation Mono',monospace;font-size:16px;color:#46494c">264</div>
 <div class="a" style="left:1236.5px;top:0;width:2.4px;height:44px;background:#6b6e71"></div>
 <div class="a txt" style="left:1247.2px;top:25.5px;font-family:'Liberation Mono',monospace;font-size:16px;color:#f4f4f4">265</div>
 <div class="a" style="left:1284.6px;top:0;width:1.2px;height:44px;background:#222427"></div>
 <div class="a txt" style="left:1294.7px;top:25.5px;font-family:'Liberation Mono',monospace;font-size:16px;color:#46494c">266</div>
 <div class="a" style="left:1332.1px;top:0;width:1.2px;height:44px;background:#222427"></div>
 <div class="a txt" style="left:1342.2px;top:25.5px;font-family:'Liberation Mono',monospace;font-size:16px;color:#46494c">267</div>
 <div class="a" style="left:1379.6px;top:0;width:1.2px;height:44px;background:#222427"></div>
 <div class="a txt" style="left:1389.7px;top:25.5px;font-family:'Liberation Mono',monospace;font-size:16px;color:#46494c">268</div>
 <div class="a" style="left:1427.1px;top:0;width:1.2px;height:44px;background:#222427"></div>
 <div class="a txt" style="left:1437.2px;top:25.5px;font-family:'Liberation Mono',monospace;font-size:16px;color:#46494c">269</div>
</div>
<div class="a" style="left:205px;top:777px;width:1377.6px;height:44.3px;background:#cfd0d0;overflow:hidden">
 <div class="a" style="left:1.9px;top:0;width:1px;height:44.3px;background:#c4c5c6"></div>
 <div class="a" style="left:49.4px;top:0;width:1px;height:44.3px;background:#c4c5c6"></div>
 <div class="a" style="left:96.9px;top:0;width:1px;height:44.3px;background:#c4c5c6"></div>
 <div class="a" style="left:144.4px;top:0;width:1px;height:44.3px;background:#c4c5c6"></div>
 <div class="a" style="left:191.9px;top:0;width:1px;height:44.3px;background:#c4c5c6"></div>
 <div class="a" style="left:239.4px;top:0;width:1px;height:44.3px;background:#c4c5c6"></div>
 <div class="a" style="left:286.9px;top:0;width:1px;height:44.3px;background:#c4c5c6"></div>
 <div class="a" style="left:334.5px;top:0;width:1px;height:44.3px;background:#c4c5c6"></div>
 <div class="a" style="left:382.0px;top:0;width:1px;height:44.3px;background:#c4c5c6"></div>
 <div class="a" style="left:429.5px;top:0;width:1px;height:44.3px;background:#c4c5c6"></div>
 <div class="a" style="left:477.0px;top:0;width:1px;height:44.3px;background:#c4c5c6"></div>
 <div class="a" style="left:524.5px;top:0;width:1px;height:44.3px;background:#c4c5c6"></div>
 <div class="a" style="left:572.0px;top:0;width:1px;height:44.3px;background:#c4c5c6"></div>
 <div class="a" style="left:619.5px;top:0;width:1px;height:44.3px;background:#c4c5c6"></div>
 <div class="a" style="left:667.0px;top:0;width:1px;height:44.3px;background:#c4c5c6"></div>
 <div class="a" style="left:714.5px;top:0;width:1px;height:44.3px;background:#c4c5c6"></div>
 <div class="a" style="left:762.0px;top:0;width:1px;height:44.3px;background:#c4c5c6"></div>
 <div class="a" style="left:809.6px;top:0;width:1px;height:44.3px;background:#c4c5c6"></div>
 <div class="a" style="left:857.1px;top:0;width:1px;height:44.3px;background:#c4c5c6"></div>
 <div class="a" style="left:904.6px;top:0;width:1px;height:44.3px;background:#c4c5c6"></div>
 <div class="a" style="left:952.1px;top:0;width:1px;height:44.3px;background:#c4c5c6"></div>
 <div class="a" style="left:999.6px;top:0;width:1px;height:44.3px;background:#c4c5c6"></div>
 <div class="a" style="left:1047.1px;top:0;width:1px;height:44.3px;background:#c4c5c6"></div>
 <div class="a" style="left:1094.6px;top:0;width:1px;height:44.3px;background:#c4c5c6"></div>
 <div class="a" style="left:1142.1px;top:0;width:1px;height:44.3px;background:#c4c5c6"></div>
 <div class="a" style="left:1189.6px;top:0;width:1px;height:44.3px;background:#c4c5c6"></div>
 <div class="a" style="left:1237.2px;top:0;width:1px;height:44.3px;background:#c4c5c6"></div>
 <div class="a" style="left:1284.7px;top:0;width:1px;height:44.3px;background:#c4c5c6"></div>
 <div class="a" style="left:1332.2px;top:0;width:1px;height:44.3px;background:#c4c5c6"></div>
 <div class="a" style="left:1379.7px;top:0;width:1px;height:44.3px;background:#c4c5c6"></div>
 <div class="a" style="left:1427.2px;top:0;width:1px;height:44.3px;background:#c4c5c6"></div>
 <div class="a" style="left:572.5px;top:0;width:47.5px;height:44.3px;background:#ffffff"></div>
 <div class="a" style="left:857.6px;top:0;width:47.5px;height:44.3px;background:#ffffff"></div>
</div>
<div class="a" style="left:205px;top:822.3px;width:1377.6px;height:20.9px;background:#3b3d3f;overflow:hidden">
 <div class="a" style="left:-10.0px;top:0;width:59.1px;height:40px;background:#fff;border-radius:5px 5px 0 0"></div>
 <div class="a" style="left:50.7px;top:0;width:93.4px;height:40px;background:#fff;border-radius:5px 5px 0 0"></div>
 <div class="a" style="left:63.6px;top:15.7px;width:21px;height:21px;border-radius:50%;background:#20df9a"></div>
 <div class="a" style="left:145.7px;top:0;width:45.9px;height:40px;background:#fff;border-radius:5px 5px 0 0"></div>
 <div class="a" style="left:158.6px;top:15.7px;width:21px;height:21px;border-radius:50%;background:#20df9a"></div>
 <div class="a" style="left:193.2px;top:0;width:93.4px;height:40px;background:#fff;border-radius:5px 5px 0 0"></div>
 <div class="a" style="left:206.1px;top:15.7px;width:21px;height:21px;border-radius:50%;background:#20df9a"></div>
 <div class="a" style="left:288.2px;top:0;width:45.9px;height:40px;background:#fff;border-radius:5px 5px 0 0"></div>
 <div class="a" style="left:301.1px;top:15.7px;width:21px;height:21px;border-radius:50%;background:#20df9a"></div>
 <div class="a" style="left:335.8px;top:0;width:45.9px;height:40px;background:#fff;border-radius:5px 5px 0 0"></div>
 <div class="a" style="left:348.6px;top:15.7px;width:21px;height:21px;border-radius:50%;background:#20df9a"></div>
 <div class="a" style="left:383.3px;top:0;width:45.9px;height:40px;background:#fff;border-radius:5px 5px 0 0"></div>
 <div class="a" style="left:396.1px;top:15.7px;width:21px;height:21px;border-radius:50%;background:#20df9a"></div>
 <div class="a" style="left:430.8px;top:0;width:45.9px;height:40px;background:#fff;border-radius:5px 5px 0 0"></div>
 <div class="a" style="left:443.6px;top:15.7px;width:21px;height:21px;border-radius:50%;background:#20df9a"></div>
 <div class="a" style="left:478.3px;top:0;width:45.9px;height:40px;background:#fff;border-radius:5px 5px 0 0"></div>
 <div class="a" style="left:491.1px;top:15.7px;width:21px;height:21px;border-radius:50%;background:#20df9a"></div>
 <div class="a" style="left:525.8px;top:0;width:45.9px;height:40px;background:#fff;border-radius:5px 5px 0 0"></div>
 <div class="a" style="left:538.7px;top:15.7px;width:21px;height:21px;border-radius:50%;background:#20df9a"></div>
 <div class="a" style="left:573.3px;top:0;width:45.9px;height:40px;background:#fff;border-radius:5px 5px 0 0"></div>
 <div class="a" style="left:586.2px;top:15.7px;width:21px;height:21px;border-radius:50%;background:#20df9a"></div>
 <div class="a" style="left:620.8px;top:0;width:45.9px;height:40px;background:#fff;border-radius:5px 5px 0 0"></div>
 <div class="a" style="left:633.7px;top:15.7px;width:21px;height:21px;border-radius:50%;background:#20df9a"></div>
 <div class="a" style="left:668.3px;top:0;width:93.4px;height:40px;background:#fff;border-radius:5px 5px 0 0"></div>
 <div class="a" style="left:681.2px;top:15.7px;width:21px;height:21px;border-radius:50%;background:#20df9a"></div>
 <div class="a" style="left:763.3px;top:0;width:45.9px;height:40px;background:#fff;border-radius:5px 5px 0 0"></div>
 <div class="a" style="left:776.2px;top:15.7px;width:21px;height:21px;border-radius:50%;background:#20df9a"></div>
 <div class="a" style="left:810.9px;top:0;width:45.9px;height:40px;background:#fff;border-radius:5px 5px 0 0"></div>
 <div class="a" style="left:823.7px;top:15.7px;width:21px;height:21px;border-radius:50%;background:#20df9a"></div>
 <div class="a" style="left:858.4px;top:0;width:45.9px;height:40px;background:#fff;border-radius:5px 5px 0 0"></div>
 <div class="a" style="left:871.2px;top:15.7px;width:21px;height:21px;border-radius:50%;background:#20df9a"></div>
 <div class="a" style="left:905.9px;top:0;width:45.9px;height:40px;background:#fff;border-radius:5px 5px 0 0"></div>
 <div class="a" style="left:918.7px;top:15.7px;width:21px;height:21px;border-radius:50%;background:#20df9a"></div>
 <div class="a" style="left:953.4px;top:0;width:45.9px;height:40px;background:#fff;border-radius:5px 5px 0 0"></div>
 <div class="a" style="left:966.2px;top:15.7px;width:21px;height:21px;border-radius:50%;background:#20df9a"></div>
 <div class="a" style="left:1000.9px;top:0;width:45.9px;height:40px;background:#fff;border-radius:5px 5px 0 0"></div>
 <div class="a" style="left:1013.8px;top:15.7px;width:21px;height:21px;border-radius:50%;background:#20df9a"></div>
 <div class="a" style="left:1048.4px;top:0;width:93.4px;height:40px;background:#fff;border-radius:5px 5px 0 0"></div>
 <div class="a" style="left:1061.3px;top:15.7px;width:21px;height:21px;border-radius:50%;background:#20df9a"></div>
 <div class="a" style="left:1143.4px;top:0;width:93.4px;height:40px;background:#fff;border-radius:5px 5px 0 0"></div>
 <div class="a" style="left:1156.3px;top:15.7px;width:21px;height:21px;border-radius:50%;background:#20df9a"></div>
 <div class="a" style="left:1238.5px;top:0;width:148.3px;height:40px;background:#fff;border-radius:5px 5px 0 0"></div>
 <div class="a" style="left:1251.3px;top:15.7px;width:21px;height:21px;border-radius:50%;background:#20df9a"></div>
</div>
<svg class="a" style="left:205px;top:776px" width="1397" height="68" viewBox="205 776 1397 68">
 <rect x="205" y="820.9" width="1377.6" height="1.5" fill="#3b3d3f"/>
 <path d="M587.5 777 L587.5 821.5" stroke="#4a4c4e" stroke-width="1.5"/>
 <path d="M582.0 821.5 Q587.5 821.5 587.5 816.0 Q587.5 821.5 593.0 821.5Z" fill="#3b3d3f"/>
 <path d="M582.0 821.5 Q587.5 821.5 587.5 827.0 Q587.5 821.5 593.0 821.5Z" fill="#3b3d3f"/>
 <path d="M777.5 777 L777.5 821.5" stroke="#4a4c4e" stroke-width="1.5"/>
 <path d="M772.0 821.5 Q777.5 821.5 777.5 816.0 Q777.5 821.5 783.0 821.5Z" fill="#3b3d3f"/>
 <path d="M772.0 821.5 Q777.5 821.5 777.5 827.0 Q777.5 821.5 783.0 821.5Z" fill="#3b3d3f"/>
 <path d="M825.0 777 L825.0 821.5" stroke="#4a4c4e" stroke-width="1.5"/>
 <path d="M819.5 821.5 Q825.0 821.5 825.0 816.0 Q825.0 821.5 830.5 821.5Z" fill="#3b3d3f"/>
 <path d="M819.5 821.5 Q825.0 821.5 825.0 827.0 Q825.0 821.5 830.5 821.5Z" fill="#3b3d3f"/>
 <path d="M872.5 777 L872.5 821.5" stroke="#4a4c4e" stroke-width="1.5"/>
 <path d="M867.0 821.5 Q872.5 821.5 872.5 816.0 Q872.5 821.5 878.0 821.5Z" fill="#3b3d3f"/>
 <path d="M867.0 821.5 Q872.5 821.5 872.5 827.0 Q872.5 821.5 878.0 821.5Z" fill="#3b3d3f"/>
 <path d="M920.0 777 L920.0 821.5" stroke="#4a4c4e" stroke-width="1.5"/>
 <path d="M914.5 821.5 Q920.0 821.5 920.0 816.0 Q920.0 821.5 925.5 821.5Z" fill="#3b3d3f"/>
 <path d="M967.5 777 L967.5 821.5" stroke="#4a4c4e" stroke-width="1.5"/>
 <path d="M962.0 821.5 Q967.5 821.5 967.5 816.0 Q967.5 821.5 973.0 821.5Z" fill="#3b3d3f"/>
 <path d="M962.0 821.5 Q967.5 821.5 967.5 827.0 Q967.5 821.5 973.0 821.5Z" fill="#3b3d3f"/>
 <path d="M1062.6 777 L1062.6 821.5" stroke="#4a4c4e" stroke-width="1.5"/>
 <path d="M1057.1 821.5 Q1062.6 821.5 1062.6 816.0 Q1062.6 821.5 1068.1 821.5Z" fill="#3b3d3f"/>
 <path d="M1057.1 821.5 Q1062.6 821.5 1062.6 827.0 Q1062.6 821.5 1068.1 821.5Z" fill="#3b3d3f"/>
 <path d="M1110.1 777 L1110.1 821.5" stroke="#4a4c4e" stroke-width="1.5"/>
 <path d="M1104.6 821.5 Q1110.1 821.5 1110.1 816.0 Q1110.1 821.5 1115.6 821.5Z" fill="#3b3d3f"/>
 <path d="M1104.6 821.5 Q1110.1 821.5 1110.1 827.0 Q1110.1 821.5 1115.6 821.5Z" fill="#3b3d3f"/>
 <path d="M1300.1 777 L1300.1 821.5" stroke="#4a4c4e" stroke-width="1.5"/>
 <path d="M1294.6 821.5 Q1300.1 821.5 1300.1 816.0 Q1300.1 821.5 1305.6 821.5Z" fill="#3b3d3f"/>
</svg>
<div class="a" style="left:601.1px;top:785.9px;width:21px;height:21px;border-radius:50%;border:3.6px solid #a9aaab"></div>
<div class="a" style="left:791.0px;top:785.6px;width:21.4px;height:21.4px;border-radius:50%;background:#20df9a"></div>
<div class="a" style="left:838.7px;top:785.9px;width:21px;height:21px;border-radius:50%;border:3.6px solid #a9aaab"></div>
<div class="a" style="left:886.2px;top:785.9px;width:21px;height:21px;border-radius:50%;border:3.6px solid #a9aaab"></div>
<div class="a" style="left:933.7px;top:785.9px;width:21px;height:21px;border-radius:50%;border:3.6px solid #a9aaab"></div>
<div class="a" style="left:981.2px;top:785.9px;width:21px;height:21px;border-radius:50%;border:3.6px solid #a9aaab"></div>
<div class="a" style="left:1076.0px;top:785.6px;width:21.4px;height:21.4px;border-radius:50%;background:#20df9a"></div>
<div class="a" style="left:1123.7px;top:785.9px;width:21px;height:21px;border-radius:50%;border:3.6px solid #a9aaab"></div>
<div class="a" style="left:1313.8px;top:785.9px;width:21px;height:21px;border-radius:50%;border:3.6px solid #a9aaab"></div>
<div class="a" style="left:1584.3px;top:779.5px;width:17.7px;height:62.5px;border-radius:9px;background:#b5b5b5"></div>
<div class="a" style="left:306px;top:845.5px;width:125px;height:18.5px;border-radius:9.25px;background:#b0b0b0"></div>
<svg class="a" style="left:205px;top:733px" width="60" height="112" viewBox="205 733 60 112">
 <path d="M215.3 733 L247.2 733 L247.2 762.2 L231.3 777 L215.3 762.2Z" fill="#f55b5b"/>
 <rect x="229.5" y="770" width="3.8" height="73.2" fill="#f55b5b"/>
 <rect x="221.3" y="737.2" width="19.9" height="2.2" fill="#d83a3a"/>
 <rect x="221.3" y="742.2" width="19.9" height="2.2" fill="#d83a3a"/>
 <rect x="221.3" y="747.4" width="19.9" height="2.2" fill="#d83a3a"/>
</svg>

<!-- TOOLBAR CONTENT -->
<div class="a" style="left:101px;top:52px;width:38px;height:37px;border:2.2px solid #1ecfa0;border-radius:3px"></div>
<div class="a" style="left:513px;top:55px;width:3px;height:31px;background:#1c1c1c"></div>
<div class="a" style="left:615.5px;top:55px;width:3px;height:31px;background:#1c1c1c"></div>
<div class="a" style="left:669px;top:54px;width:50px;height:33px;border-radius:5px;background:#4a4a4a"></div>
<div class="a txt" style="left:689px;top:60px;font-size:20px;color:#f2f2f2">1</div>
<svg class="a" style="left:0;top:0" width="1919" height="100" viewBox="0 0 1919 100">
 <g fill="#fff" stroke="none">
  <!-- select -->
  <rect x="20.7" y="59.7" width="13.4" height="13.4" fill="none" stroke="#ddd" stroke-width="1.4"/>
  <rect x="19.5" y="58.5" width="2.6" height="2.6" fill="#ccc"/><rect x="32.6" y="58.5" width="2.6" height="2.6" fill="#ccc"/><rect x="19.5" y="71.6" width="2.6" height="2.6" fill="#ccc"/>
  <path d="M24.2 63.5 L27.2 63.5 L41.5 74.2 L32.8 77.3 L26 83.2 L24.2 83.2Z" fill="#2e2e2e"/>
  <path d="M25.8 64.6 L40 74.4 L32 77.3 L25.8 82Z"/>
  <!-- brush -->
  <path d="M72.9 69.6 C75.5 66.6 81 61.5 86.6 58.8 Q87.6 58.5 87.3 59.4 C85.2 63.8 80 69.5 76.8 72.8 Z"/>
  <path d="M70.1 72.9 L72.1 70.8 L75.1 74.7 L72.9 76.2 Z"/>
  <path d="M67.4 74.1 C69.6 74.3 71.4 76 71.4 78.1 C71.4 80.5 69 81.7 66.5 81.8 L62.9 81.9 C63.8 80.8 64.2 79.5 64.4 78 C64.7 76 65.8 74.4 67.4 74.1 Z"/>
  <!-- pencil -->
  <path d="M130.8 62.7 L127.2 59.3 L124.8 61.8 L128.4 65.2Z" stroke="#fff" stroke-width="0.7" stroke-linejoin="round"/>
  <path d="M123.3 63.1 L127.2 66.8 L115.1 79.6 C113.5 80.4 111.5 81 110 81.2 C110.2 79.8 110.6 77.5 111.2 75.9 Z"/>
  <path d="M111.8 77.9 L113.7 79.6 L111.3 80.3Z" fill="#2e2e2e"/>
  <!-- eraser -->
  <path d="M171.6 58.7 L180.2 67.2 L165.5 82.2 L151 82.2 C150 82.2 149.8 81.5 149.8 80.8 C149.8 80 150.3 79.5 151 79.5 L160.7 79.5 L156.8 75.5 C156 74.7 156 73.5 156.8 72.7Z M164.8 69 L159.9 73.9 L164.9 78.9 L169.8 74Z"/>
  <!-- rect -->
  <rect x="199" y="60" width="21.8" height="20.8" rx="1.2" fill="none" stroke="#fff" stroke-width="2.6"/>
  <!-- circle -->
  <circle cx="255" cy="70.4" r="10.9" fill="none" stroke="#fff" stroke-width="2.6"/>
  <!-- line -->
  <path d="M289.3 80.4 L310.6 60.4" stroke="#fff" stroke-width="3" stroke-linecap="round"/>
  <!-- node tool -->
  <g fill="none" stroke="#fff" stroke-width="1.6"><circle cx="336.7" cy="71.5" r="2.9"/><circle cx="341.7" cy="63.4" r="2.9"/><circle cx="352.3" cy="62.5" r="2.9"/><path d="M338.2 69 L340.3 65.8 M344.5 63.2 L349.4 62.7"/></g>
  <path d="M344 66.9 L357 75.7 L350 78.2 L344 82Z"/>
  <!-- A -->
  <path d="M381.6 80.6 L390 60.6 L398.4 80.6" fill="none" stroke="#fff" stroke-width="3.6" stroke-linecap="round" stroke-linejoin="round"/>
  <path d="M385.2 72.6 L394.8 72.6" fill="none" stroke="#fff" stroke-width="3"/>
  <!-- bucket -->
  <path d="M425.3 72.5 L436.2 63.8 L446.9 72.5 L437.2 81.9Z M429.2 71.8 L436 65.5 L443.5 72.2Z" fill-rule="evenodd"/>
  <rect x="433" y="58.9" width="2" height="10.4"/>
  <path d="M434.6 64.6 L437.4 61.6" stroke="#fff" stroke-width="1.9"/>
  <path d="M425.2 76 C424 77.8 422.9 79 422.9 80 C422.9 81.2 423.9 82 425.2 82 C426.5 82 427.6 81.2 427.6 80 C427.6 79 426.5 77.8 425.2 76Z"/>
  <!-- dropper -->
  <path d="M478.47 65.86 L479.74 64.59 L480.59 65.44 L485.70 60.38 A3 3 0 0 1 489.92 64.64 L484.81 69.70 L485.65 70.55 L484.37 71.82Z"/>
  <path d="M478.17 67.83 L482.39 72.09 L476.01 77.29 C473.38 78.90 470.76 80.51 469.06 81.07 C468.79 79.23 469.65 76.55 472.35 73.60Z"/>
  <!-- color circles -->
  <circle cx="546" cy="70.3" r="16" fill="#bdbdbd"/><circle cx="546" cy="70.3" r="11" fill="#000"/>
  <circle cx="585" cy="70.3" r="16" fill="#000"/><circle cx="585" cy="70.3" r="11.2" fill="#2e2e2e"/>
  <!-- lines -->
  <rect x="633" y="58.5" width="21.5" height="2.5" fill="#d0d0d0"/><rect x="633" y="65.2" width="21.5" height="2.2" fill="#d0d0d0"/><rect x="633" y="70.8" width="21.5" height="2" fill="#c8c8c8"/><rect x="633" y="76.2" width="21.5" height="1.6" fill="#c0c0c0"/><rect x="633" y="80.7" width="21.5" height="1.2" fill="#b8b8b8"/>
  <!-- dropdown triangle -->
  <path d="M1337.7 65.9 L1362 65.9 L1349.8 78.7Z"/>
  <!-- trash -->
  <path d="M1390.3 59 L1399.7 59 L1399.7 62.2 L1405 62.2 L1405 65.4 L1385 65.4 L1385 62.2 L1390.3 62.2Z M1392.2 60.7 L1392.2 62.2 L1397.8 62.2 L1397.8 60.7Z" fill-rule="evenodd"/>
  <path d="M1386.9 66.3 L1403.1 66.3 L1401 81.9 L1389 81.9Z M1391.5 69 L1392.5 79 L1394 79 L1393.3 69Z M1396.7 69 L1396 79 L1397.5 79 L1398.5 69Z" fill-rule="evenodd"/>
  <!-- copy -->
  <path d="M1430 60 Q1430 59 1431 59 L1446 59 Q1447 59 1447 60 L1447 61.8 L1433 61.8 L1433 79 L1430 79Z"/>
  <path d="M1433 62 L1450 62 L1450 82 L1433 82Z M1435.6 64.4 L1435.6 79.2 L1447.2 79.2 L1447.2 64.4Z" fill-rule="evenodd"/>
  <path d="M1444.6 68.3 C1443.9 67.4 1442.8 67 1441.6 67 C1439.4 67 1437.7 68.9 1437.7 71.6 C1437.7 74.3 1439.4 76.2 1441.6 76.2 C1442.8 76.2 1443.9 75.7 1444.6 74.8" fill="none" stroke="#fff" stroke-width="1.9"/>
  <!-- paste -->
  <path d="M1475 60 Q1475 59 1476 59 L1491 59 Q1492 59 1492 60 L1492 61.8 L1478 61.8 L1478 79 L1475 79Z"/>
  <path d="M1478 62 L1495 62 L1495 82 L1478 82Z M1480.6 64.4 L1480.6 79.2 L1492.2 79.2 L1492.2 64.4Z" fill-rule="evenodd"/>
  <path d="M1483.6 76.2 L1483.6 67.8 L1487.3 67.8 C1489 67.8 1490 68.8 1490 70.3 C1490 71.8 1489 72.8 1487.3 72.8 L1483.6 72.8" fill="none" stroke="#fff" stroke-width="1.9"/>
  <!-- undo -->
  <path d="M1529.5 65.5 C1534 65.5 1537.3 69 1537.3 73.2 C1537.3 77.2 1534.5 80.3 1530.5 80.7" fill="none" stroke="#fff" stroke-width="3" stroke-linecap="round"/>
  <path d="M1521 63.3 L1527.3 58.7 L1528 68 Z"/>
  <!-- redo -->
  <path d="M1575.5 65.5 C1571 65.5 1567.7 69 1567.7 73.2 C1567.7 77.2 1570.5 80.3 1574.5 80.7" fill="none" stroke="#fff" stroke-width="3" stroke-linecap="round"/>
  <path d="M1584 63.3 L1577.7 58.7 L1577 68 Z"/>
 </g>
</svg>
<div class="a txt" style="left:1621px;top:57px;font-size:27px;color:#eeeeee;z-index:3">Inspector</div>
</body></html>
